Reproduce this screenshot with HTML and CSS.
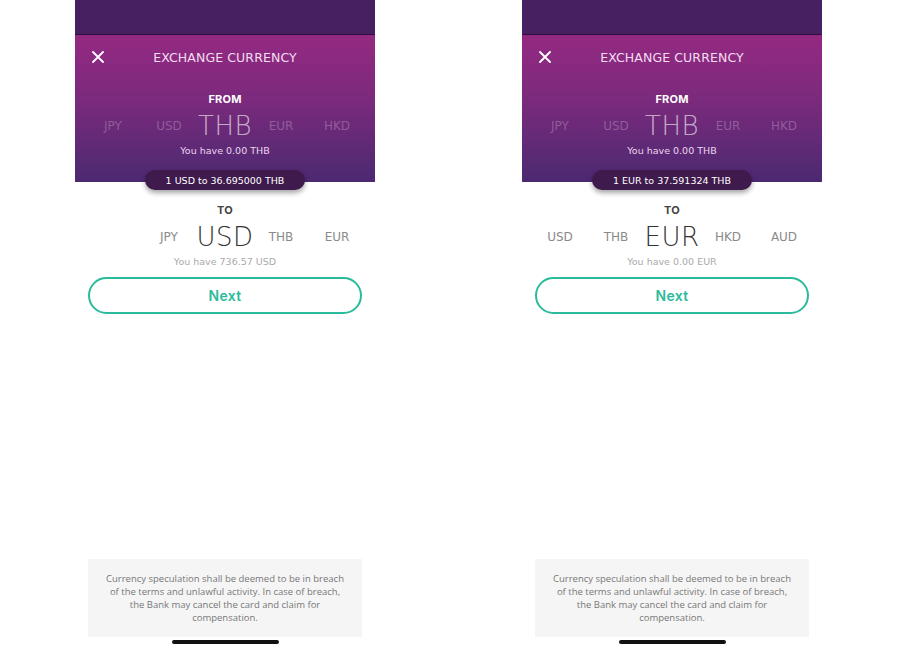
FILE: index.html
```html
<!DOCTYPE html>
<html>
<head>
<meta charset="utf-8">
<link rel="stylesheet" href="styles.css">
</head>
<body>
<div class="screens">
  <div class="phone">
    <div class="topbar"></div>
    <div class="header">
      <div class="title-row">
        <svg class="close" width="12" height="12" viewBox="0 0 12 12"><path d="M1 1L11 11M11 1L1 11" stroke="#fff" stroke-width="1.8" stroke-linecap="round"/></svg>
        <span class="title">EXCHANGE CURRENCY</span>
      </div>
      <div class="label light">FROM</div>
      <div class="cur-row">
        <span class="cur">JPY</span><span class="cur">USD</span><span class="cur big">THB</span><span class="cur">EUR</span><span class="cur">HKD</span>
      </div>
      <div class="have light">You have 0.00 THB</div>
      <div class="pill">1 USD to 36.695000 THB</div>
    </div>
    <div class="label dark">TO</div>
    <div class="cur-row to">
      <span class="cur"></span><span class="cur">JPY</span><span class="cur big">USD</span><span class="cur">THB</span><span class="cur">EUR</span>
    </div>
    <div class="have dark">You have 736.57 USD</div>
    <button class="next">Next</button>
    <div class="spacer"></div>
    <div class="notice">Currency speculation shall be deemed to be in breach of the terms and unlawful activity. In case of breach, the Bank may cancel the card and claim for compensation.</div>
    <div class="homebar"></div>
  </div>

  <div class="phone">
    <div class="topbar"></div>
    <div class="header">
      <div class="title-row">
        <svg class="close" width="12" height="12" viewBox="0 0 12 12"><path d="M1 1L11 11M11 1L1 11" stroke="#fff" stroke-width="1.8" stroke-linecap="round"/></svg>
        <span class="title">EXCHANGE CURRENCY</span>
      </div>
      <div class="label light">FROM</div>
      <div class="cur-row">
        <span class="cur">JPY</span><span class="cur">USD</span><span class="cur big">THB</span><span class="cur">EUR</span><span class="cur">HKD</span>
      </div>
      <div class="have light">You have 0.00 THB</div>
      <div class="pill">1 EUR to 37.591324 THB</div>
    </div>
    <div class="label dark">TO</div>
    <div class="cur-row to">
      <span class="cur">USD</span><span class="cur">THB</span><span class="cur big">EUR</span><span class="cur">HKD</span><span class="cur">AUD</span>
    </div>
    <div class="have dark">You have 0.00 EUR</div>
    <button class="next">Next</button>
    <div class="spacer"></div>
    <div class="notice">Currency speculation shall be deemed to be in breach of the terms and unlawful activity. In case of breach, the Bank may cancel the card and claim for compensation.</div>
    <div class="homebar"></div>
  </div>
</div>
</body>
</html>
```

FILE: styles.css
```css
* { box-sizing: border-box; }
html, body { margin: 0; padding: 0; background: #fff; }
body { font-family: "Open Sans", "DejaVu Sans", sans-serif; }
.screens {
  display: flex;
  gap: 147px;
  padding-left: 75px;
}
.phone {
  width: 300px;
  height: 650px;
  display: flex;
  flex-direction: column;
  background: #fff;
}
.phone > *, .header > * { flex-shrink: 0; }
.phone > .spacer { flex: 1 1 auto; }
.topbar {
  height: 35px;
  background: #472062;
  border-bottom: 1px solid #2c113c;
}
.header {
  height: 147px;
  background: linear-gradient(180deg, #952982 0%, #7a2a7c 45%, #4b2971 100%);
  display: flex;
  flex-direction: column;
  align-items: center;
  position: relative;
  z-index: 1;
}
.title-row {
  width: 100%;
  height: 44px;
  display: flex;
  align-items: center;
  justify-content: center;
  position: relative;
}
.close {
  position: absolute;
  left: 17px;
  top: 16px;
}
.title {
  font-family: "DejaVu Sans", sans-serif;
  font-size: 12.5px;
  color: #f3dff0;
  letter-spacing: 0.1px;
}
.label {
  font-family: "Inter", "DejaVu Sans", sans-serif;
  font-weight: 700;
  font-size: 11px;
  line-height: 14px;
  text-align: center;
  letter-spacing: 0.2px;
}
.header .label { margin-top: 13px; }
.label.light { color: #fff; }
.label.dark { color: #444; margin-top: 21px; }
.cur-row {
  display: flex;
  justify-content: center;
  height: 28px;
  align-items: center;
  margin-top: 6px;
}
.cur {
  width: 56px;
  text-align: center;
  font-family: "DejaVu Sans", sans-serif;
  font-size: 12px;
  white-space: nowrap;
  display: flex;
  justify-content: center;
}
.header .cur { color: rgba(255, 255, 255, 0.25); }
.header .cur.big { color: rgba(255, 255, 255, 0.62); }
.cur.big {
  font-family: "DejaVu Sans", sans-serif;
  font-weight: 200;
  font-size: 26px;
  letter-spacing: 0.5px;
}
.to .cur { color: #8a8a8a; }
.to .cur.big { color: #333; }
.have {
  font-family: "DejaVu Sans", sans-serif;
  font-size: 9.5px;
  line-height: 14px;
  margin-top: 4px;
  text-align: center;
}
.have.light { color: #ecd6ee; }
.have.dark { color: #aaa; }
.pill {
  margin-top: 12px;
  width: 160px;
  height: 20px;
  border-radius: 10px;
  background: #3e1a4d;
  color: #fff;
  font-family: "DejaVu Sans", sans-serif;
  font-size: 9.5px;
  display: flex;
  align-items: center;
  justify-content: center;
  box-shadow: 0 3px 5px rgba(0, 0, 0, 0.35);
}
.next {
  margin: 8px 13px 0;
  height: 37px;
  border: 2px solid #2bbb9c;
  border-radius: 19px;
  background: #fff;
  color: #2bbb9c;
  font-family: "Inter", "DejaVu Sans", sans-serif;
  font-weight: 600;
  font-size: 14px;
  letter-spacing: 0.3px;
  padding: 0;
}
.notice {
  margin: 0 13px;
  height: 78px;
  background: #f5f5f5;
  color: #777;
  font-size: 9.5px;
  line-height: 13px;
  text-align: center;
  padding: 13px 14px 0;
}
.homebar {
  margin: 3px auto 6px;
  width: 107px;
  height: 4px;
  border-radius: 2px;
  background: #111;
}
```
